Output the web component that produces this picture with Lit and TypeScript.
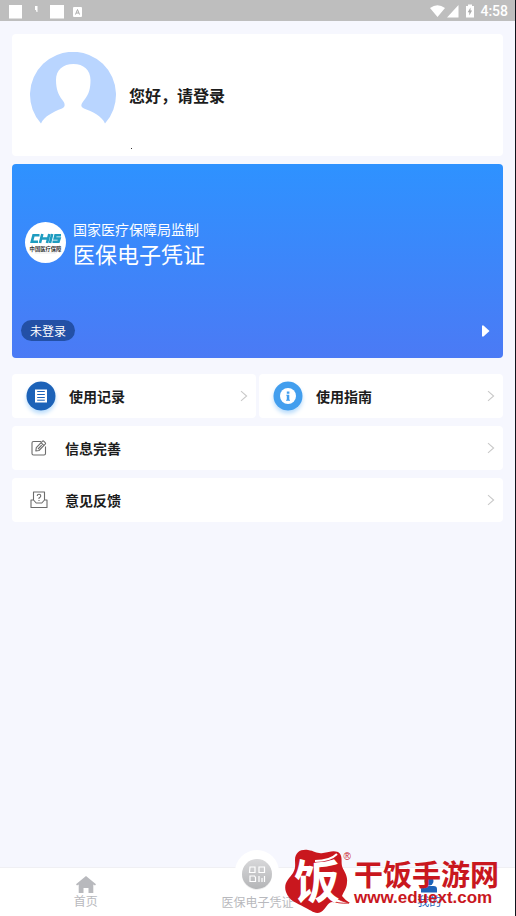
import { LitElement, html, css, svg } from "lit";
import { customElement, property } from "lit/decorators.js";

const chevron = html`<svg class="chevron" width="8" height="12" viewBox="0 0 8 12" aria-hidden="true">
  <path d="M1 1.2 6.6 6 1 10.8" fill="none" stroke="#c9c9c9" stroke-width="1.1" />
</svg>`;

const icons: Record<string, unknown> = {
  record: svg`
    <circle cx="16" cy="15" r="14.5" fill="#1c62b8" />
    <path d="M10 8.500h12v13h-12z" fill="#fff" />
    <path d="M12.2 10.500h7.6M12.2 13.500h7.6M12.2 16.500h7.6M12.2 19.200h7.6" stroke="#1c62b8" stroke-width="1" />`,
  guide: svg`
    <circle cx="16" cy="15" r="14.5" fill="#429eee" />
    <circle cx="16" cy="15" r="8" fill="#fff" />
    <path d="M14.8 10.6h2.6v2.1h-2.6zM14.3 13.8h3v5h.7v1h-3.900v-1h.7v-4h-.5z" fill="#429eee" />`,
  edit: svg`
    <path d="M11 2.500H3.500Q2 2.500 2 4v10.500Q2 16 3.500 16h10.500q1.500 0 1.500-1.500V7.500" />
    <path d="M5.800 12 6.300 8.700 12.300 2.300q.8-.8 1.600 0l1.300 1.300q.8.8 0 1.600L9 11.500zM11 3.700l2.800 2.800M8 10l3.700-3.800" />`,
  feedback: svg`
    <path d="M3.500 9.500V1h11v8.500M1 9h2.500l2.700 3h5.600l2.700-3H17v7.500H1z" />
    <path d="M7.200 5Q7.200 3.300 9 3.300T10.800 5Q10.800 6 9 7v1M9 8.900v1.100" />`,
};

@customElement("menu-entry")
export class MenuEntry extends LitElement {
  @property() label = "";
  @property() icon = "edit";
  @property({ type: Boolean }) badge = false;

  static styles = css`
    :host { display: block; min-width: 0; }
    .entry {
      display: flex; align-items: center; width: 100%; height: 44px;
      padding: 0 8px 0 13px; border: 0; border-radius: 4px; background: #fff;
      font: 700 14px/20px "Noto Sans CJK SC", sans-serif; color: #1c1c1c; text-align: left;
    }
    .label { flex: 1; }
    .round { width: 32px; height: 30px; margin-right: 12px; flex: none; border-radius: 50%; filter: drop-shadow(0 3px 2px #b9dcfb); }
    .line { width: 18px; height: 18px; margin: 0 17px 0 5px; flex: none; fill: none; stroke: #6c6c6c; stroke-width: 1.1; stroke-linejoin: round; }
    .chevron { flex: none; }
  `;

  render() {
    return html`<button class="entry" type="button">
      ${this.badge
        ? html`<svg class="round" viewBox="0 0 32 30" aria-hidden="true">${icons[this.icon]}</svg>`
        : html`<svg class="line" viewBox="0 0 18 18" aria-hidden="true">${icons[this.icon]}</svg>`}
      <span class="label">${this.label}</span>${chevron}
    </button>`;
  }
}

@customElement("app-root")
export class AppRoot extends LitElement {
  static styles = css`
    :host {
      display: flex; flex-direction: column; min-height: 100vh; position: relative; box-sizing: border-box;
      background: #f6f7fe; border-right: 1px solid #10131c; overflow: hidden;
      font-family: "Noto Sans CJK SC", sans-serif; color: #1c1c1c;
    }
    * { box-sizing: border-box; }
    .status {
      display: flex; align-items: center; justify-content: space-between; height: 21px;
      padding: 0 7px 0 8px; background: #bebebe; color: #fff;
    }
    .side { display: flex; align-items: center; }
    .clock { margin-left: 3px; font: 500 14px/20px Roboto, sans-serif; }
    main { flex: 1; display: flex; flex-direction: column; gap: 8px; padding: 13px 12px; }
    .profile {
      display: flex; align-items: center; gap: 13px; height: 122px; padding: 0 18px; position: relative;
      background: #fff; border-radius: 4px;
    }
    .avatar { width: 86px; height: 86px; flex: none; }
    .hello { margin: 0; font-size: 16px; line-height: 24px; font-weight: 700; }
    .dot { position: absolute; left: 119px; bottom: 7px; width: 1px; height: 1px; background: #333; }
    .card {
      display: flex; flex-direction: column; justify-content: space-between; height: 194px;
      margin-bottom: 8px; padding: 54px 12px 17px 13px; border: 0; border-radius: 4px;
      background: linear-gradient(#2e92ff, #4b7af5); color: #fff; text-align: left; font-family: inherit;
    }
    .brand { display: flex; align-items: center; gap: 7px; }
    .seal { width: 41px; height: 41px; flex: none; }
    .issuer { display: block; font-size: 14px; line-height: 22px; }
    .title { display: block; font-size: 22px; line-height: 26px; }
    .foot { display: flex; justify-content: space-between; align-items: center; }
    .state {
      height: 21px; padding: 0 9px; margin-left: -4px; border-radius: 11px; background: #2350a6;
      font-size: 12px; line-height: 21px;
    }
    .pair { display: grid; grid-template-columns: 1fr 1fr; gap: 3px; }
    nav {
      display: grid; grid-template: 100% / repeat(3, 1fr); height: 49px; background: #fff;
      border-top: 1px solid #f0f0f4;
    }
    .tab {
      display: flex; flex-direction: column; align-items: center; justify-content: flex-end;
      padding-bottom: 7px; font-size: 12px; line-height: 16px; color: #b8b9bd; text-decoration: none;
    }
    .middle { padding-bottom: 6px; }
    .active { color: #1d63b8; }
    .code { width: 44px; height: 44px; flex: none; }
    .mark { position: absolute; right: 16px; bottom: 0; display: flex; align-items: center; color: #c9171e; }
    .blob { position: relative; width: 70px; height: 69px; }
    .blob svg { display: block; }
    .rice {
      position: absolute; left: 10px; top: 6px; color: #fff; font-size: 46px; line-height: 50px; font-weight: 700;
    }
    .reg { position: absolute; right: 3px; top: 4px; font: 10px/12px "Liberation Sans", sans-serif; }
    .site { font-size: 29px; line-height: 32px; font-weight: 700; white-space: nowrap; }
    .url { font: 700 17px/18px "Liberation Sans", sans-serif; }
  `;

  render() {
    return html`
      <header class="status">
        <svg width="76" height="20" viewBox="0 0 76 20" aria-hidden="true">
          <path d="M1 4h13v13.500h-13zM42 4h14v13.500h-14z" fill="#fff" />
          <path d="M27 5h2.500v6h-1l-.5-2h-1z" fill="#fff" />
          <rect x="65" y="6" width="9" height="10" rx="1" fill="#fff" />
          <path d="M67.500 13.500 69.500 8.500 71.500 13.500M68.200 12h2.600" fill="none" stroke="#aaa" />
        </svg>
        <div class="side">
          <svg width="48" height="20" viewBox="0 0 48 20" aria-hidden="true">
            <path d="M1 7Q8.500 1.500 16 7L8.500 16zM29.500 4v12.500H18z" fill="#fff" />
            <path d="M37 5h2V3.500h4V5h2v11.500h-8z" fill="#fff" />
            <path d="M41.500 6.500 38.700 11.300h1.600V14.500l2.800-5h-1.600z" fill="#aaa" />
          </svg>
          <span class="clock">4:58</span>
        </div>
      </header>
      <main>
        <section class="profile">
          <svg class="avatar" viewBox="0 0 86 86" aria-hidden="true">
            <path fill="#b9d5ff" d="M11 71.500A43 43 0 1 1 75 71.500C72 64 62 59.500 54 56.500C49 54.500 52 51 55 47C59 42 60.500 36 60.500 28C60.500 18 53.500 12 43.500 12C33 12 26 18 26 28C26 37 28.500 43 32 47.500C35 51 36 54.500 32 56.500C23 60 14 64.500 11 71.500z" />
          </svg>
          <h1 class="hello">您好，请登录</h1>
          <span class="dot"></span>
        </section>
        <button class="card" type="button">
          <span class="brand">
            <svg class="seal" viewBox="0 0 41 41" aria-hidden="true">
              <circle cx="20.500" cy="20.500" r="20.500" fill="#fff" />
              <g fill="none" stroke="#1e9cc0" stroke-width="2.600">
                <path d="M14.500 13.300H8.500L6.800 19.700H13M17.300 12 15 21M16.500 16.500h6.500M24.300 12 22 21M27.200 12 25 21M36 13.300H30.500L29.700 16.500H34.500L33.500 19.700H27.500" />
              </g>
              <text x="20.500" y="29" text-anchor="middle" font-size="5.300" font-weight="700" fill="#333">中国医疗保障</text>
              <path d="M10 31h21" stroke="#ddd" stroke-width=".6" />
            </svg>
            <span><span class="issuer">国家医疗保障局监制</span><span class="title">医保电子凭证</span></span>
          </span>
          <span class="foot">
            <span class="state">未登录</span>
            <svg width="10" height="12" viewBox="0 0 10 12" aria-hidden="true"><path d="M1 .5H2.500L8.500 6 2.500 11.500H1z" fill="#fff" /></svg>
          </span>
        </button>
        <div class="pair">
          <menu-entry label="使用记录" icon="record" badge></menu-entry>
          <menu-entry label="使用指南" icon="guide" badge></menu-entry>
        </div>
        <menu-entry label="信息完善" icon="edit"></menu-entry>
        <menu-entry label="意见反馈" icon="feedback"></menu-entry>
      </main>
      <nav>
        <a class="tab" href="#home">
          <svg width="20" height="17" viewBox="0 0 20 17" aria-hidden="true"><path d="M10 0 20 8.300 19 9.500 17.300 8.500V17H12.500V12H7.500V17H2.700V8.500L1 9.500 0 8.300z" fill="#b8b9bd" /></svg>
          首页
        </a>
        <a class="tab middle" href="#code">
          <svg class="code" viewBox="0 0 44 44" aria-hidden="true">
            <defs><linearGradient id="g" x2="0" y2="1"><stop stop-color="#d8d8da" /><stop offset="1" stop-color="#b4b5b7" /></linearGradient></defs>
            <circle cx="22" cy="22" r="22" fill="#fff" />
            <circle cx="22" cy="25" r="15" fill="#eee" />
            <circle cx="22" cy="24" r="15" fill="url(#g)" />
            <path d="M15 17h5v5.500h-5.500zM24 17h5.500v5.500H24zM15 26h4.500l1 1.500V31.500H15zM24 32v-6M27 32v-4M29.500 32v-6" fill="none" stroke="#fff" stroke-width="1.200" />
          </svg>
          医保电子凭证
        </a>
        <a class="tab active" href="#me">
          <svg width="18" height="17" viewBox="0 0 18 17" aria-hidden="true"><circle cx="9" cy="5" r="4.500" fill="#1d63b8" /><path d="M1 16.500V13Q1 10 4.500 10h9Q17 10 17 13v3.500z" fill="#1d63b8" /></svg>
          我的
        </a>
      </nav>
      <aside class="mark">
        <div class="blob">
          <svg width="70" height="69" viewBox="0 0 70 69" aria-hidden="true">
            <path fill="#c9171e" d="M11 13C11 5 17 2 24 3C31 4 33 7 39 6C45 5 49 3 54 5C59 8 57 14 58 19C59 23 64 28 63 35C63 41 60 44 58 49Q61 53 66 56Q56 57 48 55C43 56 42 62 37 65C31 68 27 63 20 60C13 56 5 54 2 45C-1 36 5 32 9 26C12 21 11 17 11 13z" />
            <path d="M31 14Q46 14 53 7" fill="none" stroke="#fff" stroke-width="2" />
            <path d="M44 44Q51 53 65 56Q54 57 46 53z" fill="#fff" stroke="#c9171e" stroke-width=".8" />
          </svg>
          <span class="rice">饭</span>
          <span class="reg">®</span>
        </div>
        <div><div class="site">干饭手游网</div><div class="url">www.eduext.com</div></div>
      </aside>
    `;
  }
}
